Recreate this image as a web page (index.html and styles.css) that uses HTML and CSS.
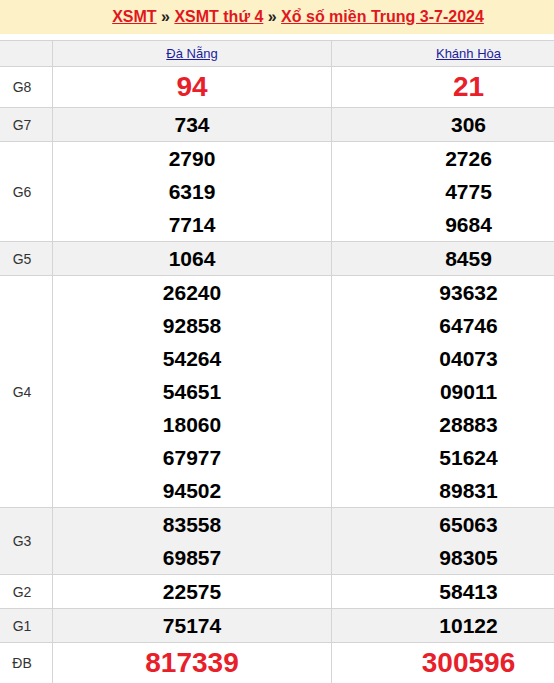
FILE: index.html
```html
<!DOCTYPE html>
<html lang="vi">
<head>
<meta charset="utf-8">
<title>XSMT thứ 4 - Xổ số miền Trung 3-7-2024</title>
<link rel="stylesheet" href="styles.css">
</head>
<body>
<div class="page">
  <div class="crumbs">
    <a href="#">XSMT</a> » <a href="#">XSMT thứ 4</a> » <a href="#">Xổ số miền Trung 3-7-2024</a>
  </div>
  <table class="results">
    <colgroup>
      <col class="c-label">
      <col class="c-prov">
      <col class="c-prov2">
    </colgroup>
    <tr class="head">
      <th></th>
      <th><a href="#">Đà Nẵng</a></th>
      <th><a href="#">Khánh Hòa</a></th>
    </tr>
    <tr class="big">
      <td class="lbl">G8</td>
      <td><div class="n red">94</div></td>
      <td><div class="n red">21</div></td>
    </tr>
    <tr class="alt">
      <td class="lbl">G7</td>
      <td><div class="n">734</div></td>
      <td><div class="n">306</div></td>
    </tr>
    <tr>
      <td class="lbl">G6</td>
      <td><div class="n">2790</div><div class="n">6319</div><div class="n">7714</div></td>
      <td><div class="n">2726</div><div class="n">4775</div><div class="n">9684</div></td>
    </tr>
    <tr class="alt">
      <td class="lbl">G5</td>
      <td><div class="n">1064</div></td>
      <td><div class="n">8459</div></td>
    </tr>
    <tr>
      <td class="lbl">G4</td>
      <td><div class="n">26240</div><div class="n">92858</div><div class="n">54264</div><div class="n">54651</div><div class="n">18060</div><div class="n">67977</div><div class="n">94502</div></td>
      <td><div class="n">93632</div><div class="n">64746</div><div class="n">04073</div><div class="n">09011</div><div class="n">28883</div><div class="n">51624</div><div class="n">89831</div></td>
    </tr>
    <tr class="alt">
      <td class="lbl">G3</td>
      <td><div class="n">83558</div><div class="n">69857</div></td>
      <td><div class="n">65063</div><div class="n">98305</div></td>
    </tr>
    <tr>
      <td class="lbl">G2</td>
      <td><div class="n">22575</div></td>
      <td><div class="n">58413</div></td>
    </tr>
    <tr class="alt">
      <td class="lbl">G1</td>
      <td><div class="n">75174</div></td>
      <td><div class="n">10122</div></td>
    </tr>
    <tr class="big">
      <td class="lbl">ĐB</td>
      <td><div class="n red">817339</div></td>
      <td><div class="n red">300596</div></td>
    </tr>
  </table>
</div>
</body>
</html>
```

FILE: styles.css
```css
html, body {
  margin: 0;
  padding: 0;
  background: #fff;
  overflow: hidden;
}
body {
  font-family: "Liberation Sans", Arial, sans-serif;
  color: #000;
}
.page {
  width: 614px;
  margin-left: -9px;
}
.crumbs {
  background: #fdf1c7;
  height: 34px;
  line-height: 34px;
  text-align: center;
  font-size: 16px;
  font-weight: bold;
  color: #222;
}
.crumbs a {
  color: #e1171f;
  text-decoration: underline;
}
.results {
  margin-top: 6px;
  width: 614px;
  border-collapse: collapse;
  table-layout: fixed;
}
.c-label { width: 61px; }
.c-prov { width: 279px; }
.c-prov2 { width: 274px; }
.results th,
.results td {
  border: 1px solid #d4d4d4;
  padding: 0;
  text-align: center;
  vertical-align: middle;
}
.results tr:first-child th { border-top: 1px solid #d4d4d4; }
.head th {
  background: #f1f1f1;
  height: 25px;
  font-size: 13px;
  font-weight: normal;
  line-height: 25px;
}
.head a {
  color: #1c1c9e;
  text-decoration: underline;
}
.alt td { background: #f1f1f1; }
.lbl {
  font-size: 14px;
  color: #333;
}
.n {
  font-size: 21px;
  font-weight: bold;
  line-height: 33px;
  color: #000;
}
.n.red {
  font-size: 28px;
  line-height: 40px;
  color: #e8202a;
}
```
